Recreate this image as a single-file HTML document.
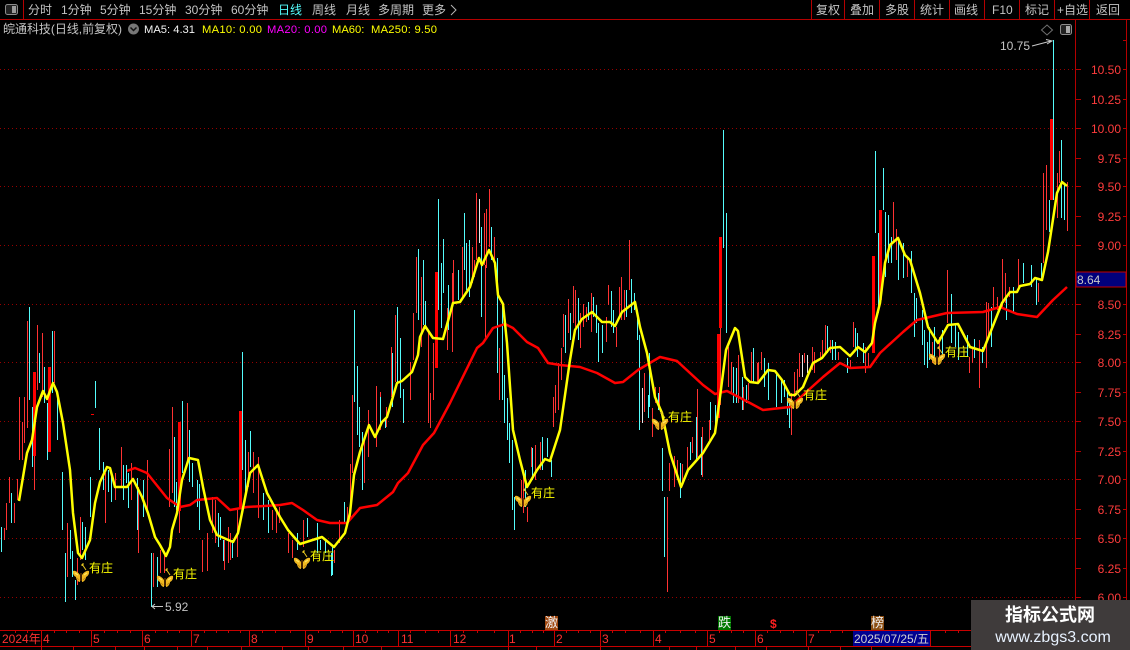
<!DOCTYPE html>
<html><head><meta charset="utf-8"><style>
html,body{margin:0;padding:0;background:#000;width:1130px;height:650px;overflow:hidden}
svg{display:block}
text{font-family:"Liberation Sans","WenQuanYi Zen Hei","Noto Sans CJK SC",sans-serif;font-size:12px}
.t{fill:#c4c4c4}.p{fill:#ff3c3c}.y{fill:#ffff00}.d{fill:#ff3030}
.m{font-size:11.2px}
</style></head><body>
<svg width="1130" height="650" viewBox="0 0 1130 650" xmlns="http://www.w3.org/2000/svg">
<defs>
<pattern id="dots" width="4" height="1" patternUnits="userSpaceOnUse"><rect width="1" height="1" fill="#960000"/></pattern>
<g id="bf">
<path d="M1 -12L5 -6M1 -12L1 -10M1 -12L3 -12" stroke="#e8c820" stroke-width="1" fill="none"/>
<path d="M-1 -1C-3 -4 -6 -6 -8 -5C-8.500 -2 -7 0 -5 1C-5 3 -3 6 -1 6Z" fill="#f0b820"/>
<path d="M1 -1C3 -4 6 -6 8 -5C8.500 -2 7 0 5 1C5 3 3 6 1 6Z" fill="#f0b820"/>
<path d="M-6 -3L-3 -1M6 -3L3 -1" stroke="#ffe860" stroke-width="1.200"/>
<path d="M-4 2L-2 4M4 2L2 4" stroke="#c88a10" stroke-width="1"/>
<path d="M0 -3V5" stroke="#5a3000" stroke-width="1.600"/>
</g>
</defs>
<rect width="1130" height="650" fill="#000"/>
<!-- grid -->
<g fill="url(#dots)">
<rect x="0" y="69" width="1075" height="1"/><rect x="0" y="128" width="1075" height="1"/><rect x="0" y="186" width="1075" height="1"/><rect x="0" y="245" width="1075" height="1"/><rect x="0" y="304" width="1075" height="1"/><rect x="0" y="362" width="1075" height="1"/><rect x="0" y="421" width="1075" height="1"/><rect x="0" y="479" width="1075" height="1"/><rect x="0" y="538" width="1075" height="1"/><rect x="0" y="597" width="1075" height="1"/>
</g>
<g transform="translate(0.5,0)" shape-rendering="crispEdges" fill="none">
<!-- wicks red -->
<path stroke="#ff3232" d="M4 528V540M6 503V530M9 477V503M14 503V523M17 479V500M19 397V460M22 422V460M24 397V443M27 321V428M34 407V490M37 325V390M42 333V397M54 331V383M67 523V577M77 558V585M80 517V560M105 473V523M115 473V500M121 447V487M131 463V500M138 487V553M147 460V513M153 553V587M160 550V573M164 553V573M169 449V507M172 407V493M179 463V533M187 403V460M202 540V572M207 533V571M212 497V533M215 500V543M224 540V570M228 527V563M230 533V560M237 510V557M248 452V487M253 452V493M258 457V518M272 510V530M276 508V533M279 507V523M288 533V553M292 540V558M303 520V547M334 550V563M339 520V543M347 507V520M350 464V517M352 395V473M364 437V483M368 410V457M376 386V447M380 392V430M386 407V427M391 347V397M395 315V382M410 362V400M413 313V360M416 257V313M421 277V347M428 330V423M430 393V428M433 343V400M447 308V350M452 273V352M453 260V302M462 247V297M472 247V283M474 260V277M476 193V260M484 213V265M485 265V340M486 209V268M489 189V247M494 237V267M499 348V400M521 480V500M523 475V513M527 507V522M531 447V467M535 445V480M540 442V470M553 397V427M555 385V413M558 363V410M561 348V380M563 314V347M568 299V333M573 286V323M575 290V327M580 313V348M583 304V327M586 307V322M591 293V332M606 317V342M608 285V305M616 327V347M619 287V317M621 277V320M624 290V320M629 240V290M644 373V412M652 408V437M655 387V403M659 387V407M667 497V592M669 463V491M674 456V487M677 460V480M682 464V485M687 447V470M692 437V453M697 389V457M702 427V477M709 420V440M720 328V405M728 347V387M731 362V393M738 355V403M743 387V410M748 383V400M751 352V382M757 363V383M758 362V383M761 352V370M791 393V435M794 372V397M797 369V393M799 353V377M804 353V363M812 347V370M814 352V373M820 352V360M822 340V357M825 325V353M830 340V353M838 352V360M850 360V368M853 322V347M865 347V373M868 353V367M893 202V243M896 229V260M907 257V277M932 342V363M939 337V360M947 270V323M969 357V373M972 347V363M979 340V388M986 302V368M988 303V337M993 287V310M997 297V310M1002 259V307M1005 273V303M1009 287V297M1018 259V287M1038 283V302M1043 173V263M1046 165V230M1057 173V218M1059 151V183M1067 182V231"/>
<!-- wicks cyan -->
<path stroke="#54fcfc" d="M1 527V552M11 493V523M29 307V400M32 407V467M39 353V383M44 367V403M47 403V460M52 331V393M57 393V440M62 472V530M65 553V602M70 530V559M72 551V577M75 580V600M82 522V550M85 527V560M90 477V517M95 381V408M99 428V470M103 462V490M108 470V492M111 473V502M123 465V500M126 465V483M128 473V508M137 478V530M143 480V517M151 553V607M157 557V587M174 437V507M176 482V510M182 401V473M189 430V482M192 463V487M197 480V507M199 484V530M218 513V547M220 517V540M223 540V561M232 540V558M242 352V470M245 440V497M250 431V467M263 493V520M268 500V533M297 533V550M307 518V537M317 523V553M320 540V550M325 540V553M331 553V576M332 547V575M344 502V523M354 310V402M357 366V435M359 407V447M362 432V490M380 397V423M385 420V428M392 353V407M397 307V382M400 338V398M403 389V423M418 249V320M423 260V325M425 301V327M438 199V310M441 263V328M443 239V293M448 285V330M458 270V300M464 213V270M466 243V290M469 240V297M481 227V317M491 227V260M497 258V373M502 303V400M504 375V423M507 398V440M509 423V463M512 440V510M514 497V530M525 470V507M532 448V480M542 437V470M547 438V457M551 460V477M565 315V353M570 313V340M578 298V340M588 302V320M593 297V317M596 305V333M598 323V362M602 325V353M611 291V327M613 310V333M626 290V317M631 279V313M634 293V310M637 310V340M639 335V430M648 395V418M649 353V407M658 393V410M662 448V491M664 497V557M680 463V498M690 442V460M696 417V460M701 437V475M710 402V430M715 405V425M723 130V248M726 213V333M733 367V403M736 368V403M742 377V410M746 385V403M753 348V383M764 358V387M768 363V400M776 373V407M781 380V403M784 380V397M787 390V415M789 400V428M827 326V353M832 340V360M835 342V360M847 358V373M855 328V350M857 333V357M863 343V363M875 151V233M878 233V313M883 168V210M885 212V277M888 215V263M891 237V263M898 240V280M903 243V278M911 251V293M914 293V337M916 298V323M922 310V345M924 330V365M927 342V368M929 327V360M934 327V363M942 330V360M951 294V343M955 323V347M958 332V360M967 335V357M974 339V358M982 347V363M991 307V347M1006 297V320M1013 287V313M1023 263V283M1031 265V287M1036 278V305M1041 263V280M1053 40V200M1049 200V232M1061 140V218M1064 183V220"/>
<path stroke="#e8e8e8" d="M479 199V243M642 388V423M802 355V377M807 355V373"/>
</g>
<!-- bodies -->
<g fill="#ff0000" shape-rendering="crispEdges">
<rect x="33" y="372" width="3" height="84"/><rect x="48" y="367" width="3" height="85"/><rect x="178" y="422" width="3" height="89"/><rect x="239" y="411" width="3" height="96"/><rect x="91" y="414" width="3" height="1"/><rect x="435" y="272" width="3" height="96"/><rect x="719" y="237" width="3" height="91"/><rect x="717" y="334" width="3" height="84"/><rect x="872" y="256" width="3" height="97"/><rect x="879" y="210" width="3" height="90"/><rect x="1050" y="119" width="3" height="81"/>
</g>
<!-- MA red -->
<polyline fill="none" stroke="#ff0000" stroke-width="2.500" stroke-linejoin="round" points="127,471 135,468 147,473 167,498 180,507 190,505 197,500 217,498 230,510 247,507 280,505 292,503 303,510 317,520 330,523 347,523 360,508 377,505 393,492 398,483 408,473 423,445 434,433 450,403 477,348 483,343 493,328 505,324 513,328 527,342 538,348 548,363 560,365 580,367 597,373 615,383 623,382 638,370 660,357 677,361 703,385 715,394 727,391 750,403 763,410 790,407 803,395 823,377 840,363 850,368 870,367 880,353 903,332 917,320 947,313 983,312 1000,307 1017,314 1037,317 1053,300 1067,287"/>
<!-- yellow -->
<polyline fill="none" stroke="#ffff00" stroke-width="2.500" stroke-linejoin="round" points="19,501 23,477 27,453 32,440 37,407 43,391 47,399 53,383 57,392 63,423 70,470 73,513 78,553 82,558 90,540 95,503 100,482 107,467 110,468 115,487 127,487 133,479 142,497 148,513 155,537 160,545 166,556 170,547 172,530 177,513 182,480 189,458 198,460 203,487 210,520 217,535 233,542 238,533 250,473 258,465 267,493 280,517 288,530 300,544 322,537 334,547 345,533 350,513 354,475 360,452 369,425 375,437 382,422 387,417 397,383 402,381 412,372 418,355 420,337 425,326 433,338 443,339 453,303 460,302 470,287 479,258 482,265 489,250 495,263 498,295 503,304 507,343 513,430 520,460 527,487 537,470 545,459 550,461 560,430 570,360 575,330 582,319 592,312 602,322 610,322 615,326 622,312 635,302 640,327 647,353 655,397 662,413 670,453 681,487 688,470 703,453 715,433 720,397 726,350 735,328 738,331 745,377 750,382 758,383 768,370 775,371 782,380 790,395 795,395 803,387 813,363 822,358 830,348 840,347 850,356 858,347 865,352 872,343 875,323 880,303 885,263 890,245 898,238 905,255 910,260 920,293 928,327 938,343 948,325 958,324 970,347 983,351 1002,303 1010,292 1017,292 1020,286 1030,284 1035,278 1042,280 1048,252 1057,193 1062,182 1067,186"/>
<!-- butterflies -->
<use href="#bf" x="81" y="576"/><use href="#bf" x="165" y="581"/><use href="#bf" x="302" y="563"/><use href="#bf" x="523" y="501"/><use href="#bf" x="660" y="424"/><use href="#bf" x="795" y="403"/><use href="#bf" x="937" y="359"/>
<g class="y">
<text x="89" y="572">有庄</text><text x="173" y="578">有庄</text><text x="310" y="560">有庄</text><text x="531" y="497">有庄</text><text x="668" y="421">有庄</text><text x="803" y="399">有庄</text><text x="945" y="356">有庄</text>
</g>
<!-- hi/lo -->
<text class="t" x="1000" y="50">10.75</text>
<path d="M1032 46L1051 41M1046 39.500L1052 41L1047 44" stroke="#c8c8c8" fill="none"/>
<text class="t" x="165" y="611">5.92</text>
<path d="M163 606.500H152M155 604L152 606.500L155 609" stroke="#c8c8c8" fill="none"/>
<!-- top bar -->
<path shape-rendering="crispEdges" stroke="#b40000" fill="none" d="M0 19.500H1130M23.500 0V19M811.500 0V19M844.500 0V19M879.500 0V19M914.500 0V19M949.500 0V19M984.500 0V19M1019.500 0V19M1054.500 0V19M1089.500 0V19"/>
<rect x="5.500" y="4.500" width="12" height="10" rx="2" fill="#222" stroke="#8c8c8c"/><rect x="12" y="6" width="4" height="7" fill="#9a9a9a"/>
<g class="t">
<text x="28" y="14">分时</text><text x="61" y="14">1分钟</text><text x="100" y="14">5分钟</text><text x="139" y="14">15分钟</text><text x="185" y="14">30分钟</text><text x="231" y="14">60分钟</text>
<text x="278" y="14" style="fill:#54fcfc">日线</text>
<text x="312" y="14">周线</text><text x="346" y="14">月线</text><text x="378" y="14">多周期</text><text x="422" y="14">更多</text>
<text x="816" y="14">复权</text><text x="850" y="14">叠加</text><text x="885" y="14">多股</text><text x="920" y="14">统计</text><text x="954" y="14">画线</text><text x="992" y="14">F10</text><text x="1025" y="14">标记</text><text x="1057" y="14">+自选</text><text x="1096" y="14">返回</text>
</g>
<path d="M451 5L456 10L451 15" stroke="#b4b4b4" fill="none"/>
<!-- info -->
<text class="t" x="3" y="33" textLength="119">皖通科技(日线,前复权)</text>
<circle cx="133.500" cy="29" r="5.500" fill="#777"/><path d="M130.500 27.500L133.500 30.500L136.500 27.500" stroke="#111" stroke-width="1.500" fill="none"/>
<text x="144" y="33" fill="#f4f4f4" class="m" textLength="51">MA5: 4.31</text>
<text x="202" y="33" class="y m" textLength="60">MA10: 0.00</text>
<text x="267" y="33" fill="#ff00ff" class="m" textLength="60">MA20: 0.00</text>
<text x="332" y="33" class="y m">MA60:</text>
<text x="371" y="33" class="y m" textLength="66">MA250: 9.50</text>
<!-- chart corner icons -->
<path d="M1047 25L1052.500 30L1047 35L1041.500 30Z" stroke="#707070" fill="none"/>
<rect x="1060.500" y="24.500" width="11" height="10" rx="2" fill="#222" stroke="#8c8c8c"/><rect x="1066" y="26" width="4" height="7" fill="#aaa"/>
<!-- price axis -->
<path shape-rendering="crispEdges" stroke="#b40000" fill="none" d="M1075.500 19V630M1126.500 19V630M1075 69.500H1081M1075 99.500H1081M1075 128.500H1081M1075 158.500H1081M1075 186.500H1081M1075 216.500H1081M1075 245.500H1081M1075 304.500H1081M1075 334.500H1081M1075 362.500H1081M1075 392.500H1081M1075 421.500H1081M1075 451.500H1081M1075 479.500H1081M1075 509.500H1081M1075 538.500H1081M1075 568.500H1081M1075 597.500H1081M1123 40.500H1127M1123 69.500H1127M1123 99.500H1127M1123 128.500H1127M1123 158.500H1127M1123 186.500H1127M1123 216.500H1127M1123 245.500H1127M1123 304.500H1127M1123 334.500H1127M1123 362.500H1127M1123 392.500H1127M1123 421.500H1127M1123 451.500H1127M1123 479.500H1127M1123 509.500H1127M1123 538.500H1127M1123 568.500H1127M1123 597.500H1127"/>
<g class="p" text-anchor="end">
<text x="1121" y="74">10.50</text><text x="1121" y="104">10.25</text><text x="1121" y="133">10.00</text><text x="1121" y="163">9.75</text><text x="1121" y="191">9.50</text><text x="1121" y="221">9.25</text><text x="1121" y="250">9.00</text><text x="1121" y="309">8.50</text><text x="1121" y="339">8.25</text><text x="1121" y="367">8.00</text><text x="1121" y="397">7.75</text><text x="1121" y="426">7.50</text><text x="1121" y="456">7.25</text><text x="1121" y="484">7.00</text><text x="1121" y="514">6.75</text><text x="1121" y="543">6.50</text><text x="1121" y="573">6.25</text><text x="1121" y="602">6.00</text>
</g>
<rect x="1076" y="272" width="50" height="15" fill="#00007c" stroke="#c00000" stroke-width="1" shape-rendering="crispEdges"/>
<text x="1077" y="284" fill="#c8c8c8">8.64</text>
<!-- date axis -->
<path shape-rendering="crispEdges" stroke="#c80000" fill="none" d="M0 630.500H1130M0 646.500H1130M41.500 630V646M91.500 630V646M142.500 630V646M191.500 630V646M249.500 630V646M305.500 630V646M353.500 630V646M398.500 630V646M450.500 630V646M508.500 630V646M554.500 630V646M600.500 630V646M653.500 630V646M707.500 630V646M755.500 630V646M806.500 630V646M930.500 630V646M15.500 631V633M27.500 631V633M54.500 631V633M66.500 631V633M79.500 631V633M104.500 631V633M117.500 631V633M130.500 631V633M155.500 631V633M167.500 631V633M179.500 631V633M204.500 631V633M216.500 631V633M228.500 631V633M240.500 631V633M262.500 631V633M275.500 631V633M290.500 631V633M318.500 631V633M330.500 631V633M342.500 631V633M365.500 631V633M377.500 631V633M388.500 631V633M410.500 631V633M425.500 631V633M438.500 631V633M463.500 631V633M477.500 631V633M494.500 631V633M520.500 631V633M532.500 631V633M543.500 631V633M566.500 631V633M578.500 631V633M590.500 631V633M612.500 631V633M625.500 631V633M640.500 631V633M665.500 631V633M680.500 631V633M695.500 631V633M719.500 631V633M731.500 631V633M743.500 631V633M767.500 631V633M780.500 631V633M793.500 631V633M818.500 631V633M830.500 631V633M842.500 631V633M945.500 631V633M958.500 631V633M41.500 647V650M73.500 647V650M115.500 647V650M144.500 647V650M177.500 647V650M207.500 647V650M241.500 647V650M282.500 647V650M308.500 647V650M343.500 647V650M381.500 647V650M508.500 647V650M536.500 647V650M600.500 647V650M669.500 647V650M696.500 647V650M735.500 647V650M766.500 647V650M808.500 647V650M840.500 647V650M871.500 647V650"/>
<g class="d">
<text x="2" y="643">2024年</text><text x="43" y="643">4</text><text x="93" y="643">5</text><text x="144" y="643">6</text><text x="193" y="643">7</text><text x="251" y="643">8</text><text x="307" y="643">9</text><text x="355" y="643">10</text><text x="401" y="643">11</text><text x="453" y="643">12</text><text x="509" y="643">1</text><text x="556" y="643">2</text><text x="602" y="643">3</text><text x="655" y="643">4</text><text x="709" y="643">5</text><text x="757" y="643">6</text><text x="808" y="643">7</text>
</g>
<rect x="853" y="631" width="77" height="15" fill="#000090" shape-rendering="crispEdges"/>
<text x="854" y="643" fill="#d0d0d0" textLength="75">2025/07/25/五</text>
<!-- badges -->
<rect x="545" y="616" width="13" height="14" fill="#a04810"/><text x="545" y="627" fill="#f0f0f0" style="font-size:13px">激</text>
<rect x="718" y="616" width="13" height="14" fill="#007800"/><text x="718" y="627" fill="#f0f0f0" style="font-size:13px">跌</text>
<text x="770" y="628" fill="#ff2020" style="font-weight:bold;font-size:12px">$</text>
<rect x="871" y="616" width="13" height="14" fill="#8a4c10"/><text x="871" y="627" fill="#f0f0f0" style="font-size:13px">榜</text>
<!-- watermark -->
<rect x="971" y="600" width="159" height="50" fill="#3f3b3b"/>
<text x="1050" y="621" text-anchor="middle" fill="#ffffff" style="font-size:18px;font-weight:bold;font-family:'Noto Sans CJK SC','WenQuanYi Zen Hei',sans-serif">指标公式网</text>
<text x="1053" y="642" text-anchor="middle" fill="#e8f2ff" style="font-size:16px">www.zbgs3.com</text>
</svg>
</body></html>
